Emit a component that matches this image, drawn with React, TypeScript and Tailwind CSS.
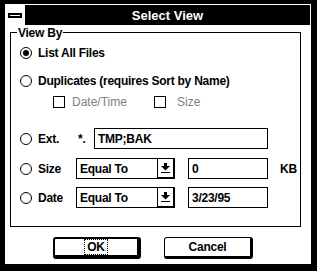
const Radio = ({ checked = false }: { checked?: boolean }) => (
  <div className="flex h-[12px] w-[12px] shrink-0 items-center justify-center rounded-full border border-black bg-white">
    {checked && <div className="h-[6px] w-[6px] rounded-full bg-black" />}
  </div>
);

const Checkbox = () => (
  <div className="h-[12px] w-[12px] shrink-0 border border-black bg-white" />
);

const TextBox = ({ value, className }: { value: string; className: string }) => (
  <div className={`flex h-[21px] items-center border border-black bg-white pl-[3px] ${className}`}>
    {value}
  </div>
);

const Dropdown = ({ value }: { value: string }) => (
  <div className="flex h-[21px] w-[99px] border border-black bg-white">
    <div className="flex flex-1 items-center pl-[3px]">{value}</div>
    <div className="flex w-[17px] items-center justify-center border-l border-b border-r border-black">
      <svg width="9" height="11" viewBox="0 0 9 11">
        <rect x="3" y="0" width="3" height="3" fill="black" />
        <path d="M0 3 H9 L4.5 7.5 Z" fill="black" />
        <rect x="0" y="9" width="9" height="1" fill="black" />
      </svg>
    </div>
  </div>
);

export default function App() {
  return (
    <div className="h-[271px] w-[317px] bg-black pt-[4px] pl-[5px] pr-[6px] pb-[7px] font-['Liberation_Sans',Arial,sans-serif] text-[12px] font-bold leading-none tracking-[-0.25px] text-black">
      <div className="flex h-full flex-col border-t border-r border-white">
        {/* title bar */}
        <div className="flex h-[20px] shrink-0">
          <div className="flex w-[20px] items-center justify-center bg-white">
            <div className="flex h-[5px] w-[14px] items-center justify-center bg-black">
              <div className="h-[1px] w-[10px] bg-white" />
            </div>
          </div>
          <div className="flex flex-1 items-center justify-center text-[13px] tracking-normal text-white">
            Select View
          </div>
        </div>

        {/* body */}
        <div className="flex-1 bg-white pt-[7px] pl-[5px]">
          <div className="relative flex h-[195px] w-[291px] flex-col border border-black">
            <div className="absolute left-[6px] top-[-6px] bg-white px-[1px] leading-[12px]">View By</div>

            <div className="mt-[10px] flex h-[20px] items-center gap-[6px] pl-[9px]">
              <Radio checked />
              <span>List All Files</span>
            </div>
            <div className="mt-[8px] flex h-[20px] items-center gap-[6px] pl-[9px]">
              <Radio />
              <span>Duplicates (requires Sort by Name)</span>
            </div>
            <div className="mt-[1px] flex h-[20px] items-center pl-[42px] font-normal tracking-normal text-[#808080]">
              <div className="flex w-[101px] items-center gap-[7px]">
                <Checkbox />
                <span>Date/Time</span>
              </div>
              <div className="flex items-center gap-[11px]">
                <Checkbox />
                <span>Size</span>
              </div>
            </div>

            <div className="mt-[16px] flex h-[21px] items-center pl-[9px]">
              <Radio />
              <span className="ml-[6px] w-[38px]">Ext.</span>
              <span className="ml-[2px] w-[16px]">*.</span>
              <TextBox value="TMP;BAK" className="w-[174px]" />
            </div>
            <div className="mt-[9px] flex h-[21px] items-center pl-[9px]">
              <Radio />
              <span className="ml-[6px] w-[38px]">Size</span>
              <Dropdown value="Equal To" />
              <TextBox value="0" className="ml-[13px] w-[80px]" />
              <span className="ml-[12px]">KB</span>
            </div>
            <div className="mt-[8px] flex h-[21px] items-center pl-[9px]">
              <Radio />
              <span className="ml-[6px] w-[38px]">Date</span>
              <Dropdown value="Equal To" />
              <TextBox value="3/23/95" className="ml-[13px] w-[80px]" />
            </div>
          </div>

          {/* buttons */}
          <div className="mt-[10px] flex gap-[23px] pl-[43px]">
            <button className="flex h-[22px] w-[88px] items-center justify-center rounded-[3px] border-2 border-r-4 border-b-4 border-black bg-white">
              <span className="border border-dotted border-black px-[2px] py-[1px]">OK</span>
            </button>
            <button className="flex h-[22px] w-[89px] items-center justify-center rounded-[3px] border border-r-[3px] border-b-[3px] border-black bg-white">
              Cancel
            </button>
          </div>
        </div>
      </div>
    </div>
  );
}
